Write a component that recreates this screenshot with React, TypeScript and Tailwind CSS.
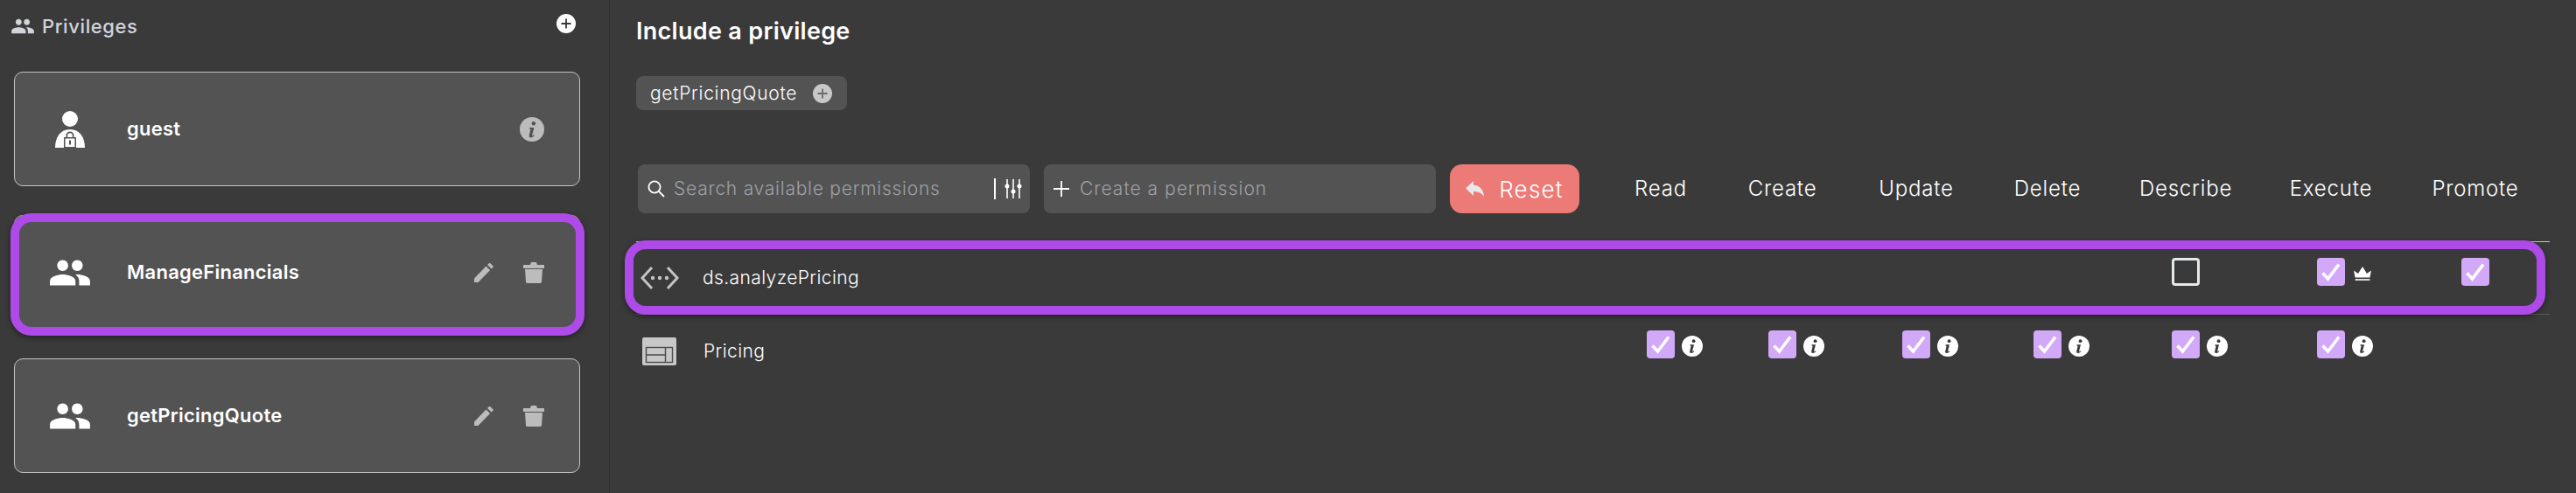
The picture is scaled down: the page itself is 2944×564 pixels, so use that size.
import React from "react";

const FONT = "font-['Inter','Liberation_Sans',sans-serif]";
const GRID = "grid grid-cols-[1107px_128px_150px_156px_144px_172px_160px_170px]";

const PEOPLE =
  "M16 11c1.66 0 2.99-1.34 2.99-3S17.66 5 16 5c-1.66 0-3 1.34-3 3s1.34 3 3 3zm-8 0c1.66 0 2.99-1.34 2.99-3S9.66 5 8 5C6.34 5 5 6.34 5 8s1.34 3 3 3zm0 2c-2.33 0-7 1.17-7 3.5V19h14v-2.5c0-2.33-4.67-3.5-7-3.5zm8 0c-.29 0-.62.02-.97.05 1.16.84 1.97 1.97 1.97 3.45V19h6v-2.5c0-2.33-4.67-3.5-7-3.5z";

function People({ className }: { className?: string }) {
  return (
    <svg viewBox="0 0 24 24" className={className} fill="currentColor">
      <path d={PEOPLE} />
    </svg>
  );
}

function GuestIcon() {
  return (
    <svg viewBox="0 0 34 42" className="h-[42px] w-[34px] text-white" fill="currentColor">
      <ellipse cx="17" cy="9" rx="9" ry="9" />
      <path d="M0 42C0 30 6 21 17 21s17 9 17 21z" />
      <path d="M10 42V30h2.5v-2a4.5 4.5 0 0 1 9 0v2H24v12z" fill="#535353" />
      <path d="M11.5 41V31.5h11V41zM14.2 30h5.6v-2a2.8 2.8 0 0 0-5.6 0z" />
      <rect x="16" y="33.5" width="2" height="5" fill="#535353" />
    </svg>
  );
}

function PencilIcon() {
  return (
    <svg viewBox="0 0 22 22" className="h-[22px] w-[22px] text-[#bcbcbc]" fill="currentColor">
      <path d="M0 17.5 13.5 3.5l4.6 4.6L4.5 22H0z" />
      <path d="M15 2l1.6-1.6a1.4 1.4 0 0 1 2 0l2.6 2.6a1.4 1.4 0 0 1 0 2L19.6 6.6z" />
    </svg>
  );
}

function TrashIcon() {
  return (
    <svg viewBox="0 0 24 24" className="h-6 w-6 text-[#bcbcbc]" fill="currentColor">
      <path d="M8 3l1-3h6l1 3h8v4H0V3z" />
      <path d="M2 8h20l-1 14.5a1.6 1.6 0 0 1-1.6 1.5H4.6A1.6 1.6 0 0 1 3 22.5z" />
    </svg>
  );
}

function InfoIcon({ className, ink }: { className?: string; ink: string }) {
  return (
    <svg viewBox="0 0 24 24" className={className} fill="currentColor">
      <circle cx="12" cy="12" r="12" />
      <circle cx="13.6" cy="6.2" r="1.9" fill={ink} />
      <path
        d="M9.4 10.2h4.6l-1.9 7.6c-.1.5.3.6.7.3l1-.8.5.6c-1 1.2-2.2 2-3.5 2-1.3 0-1.9-.8-1.6-2l1.3-5.6c.1-.5-.1-.8-.9-.9z"
        fill={ink}
      />
    </svg>
  );
}

function CircledPlus({ className, ink }: { className?: string; ink: string }) {
  return (
    <svg viewBox="0 0 22 22" className={className} fill="currentColor">
      <circle cx="11" cy="11" r="11" />
      <path d="M11 5.5v11M5.5 11h11" stroke={ink} strokeWidth="1.8" />
    </svg>
  );
}

function Checkbox({ checked }: { checked: boolean }) {
  if (!checked) return <div className="h-8 w-8 rounded-[4px] border-[3px] border-[#e5e9ec]" />;
  return (
    <div className="flex h-8 w-8 items-center justify-center rounded-[4px] bg-[#d2a8f9]">
      <svg viewBox="0 0 32 32" className="h-8 w-8" fill="none" stroke="white" strokeWidth="3.6">
        <path d="M6.5 17.5l6 6.5L25 7.5" />
      </svg>
    </div>
  );
}

function Crown() {
  return (
    <svg viewBox="0 0 20 16" className="h-4 w-5 text-white" fill="currentColor">
      <path d="M0 4.5l5 3.6L10 0l5 8.1 5-3.6-1.6 8H1.6z" />
      <rect x="1.6" y="14.2" width="16.8" height="1.6" />
    </svg>
  );
}

function Cell({ checked, extra }: { checked?: boolean; extra?: "info" | "crown" }) {
  if (checked === undefined) return <div />;
  return (
    <div className="grid grid-cols-[1fr_32px_1fr] items-center self-start pt-[18px]">
      <div />
      <Checkbox checked={checked} />
      {extra === "info" && (
        <div className="mt-1 pl-2">
          <InfoIcon className="h-6 w-6 text-white" ink="#3a3a3a" />
        </div>
      )}
      {extra === "crown" && (
        <div className="mt-1 pl-2.5">
          <Crown />
        </div>
      )}
    </div>
  );
}

function PrivilegeCard({ name, guest, selected }: { name: string; guest?: boolean; selected?: boolean }) {
  return (
    <div className="relative flex h-[131px] items-center rounded-[10px] border border-[#c4c4c4] bg-[#535353] pr-10">
      <div className="flex w-[128px] shrink-0 justify-center pr-[3px]">
        {guest ? <GuestIcon /> : <People className="h-[50px] w-[50px] text-white" />}
      </div>
      <div className="flex-1 text-[22px] font-semibold tracking-[0.25px] text-white">{name}</div>
      {guest ? (
        <InfoIcon className="h-7 w-7 text-[#bcbcbc]" ink="#535353" />
      ) : (
        <div className="flex items-center gap-[34px]">
          <PencilIcon />
          <TrashIcon />
        </div>
      )}
      {selected && (
        <div className="absolute -top-[3px] -right-[6px] -bottom-[8px] -left-[5px] rounded-[24px] border-[10px] border-[#ad4ae8] shadow-[0_2px_6px_rgba(0,0,0,0.45)]" />
      )}
    </div>
  );
}

const columns = ["Read", "Create", "Update", "Delete", "Describe", "Execute", "Promote"];

export default function App() {
  return (
    <div className={`flex h-[564px] w-[2944px] overflow-hidden bg-[#3a3a3a] ${FONT}`}>
      <div className="flex w-[697px] shrink-0 flex-col border-r border-[#2f2f2f]">
        <div className="flex h-[82px] items-start justify-between pt-[16px] pr-[38px] pl-[12px]">
          <div className="flex items-center gap-[8px]">
            <People className="h-7 w-7 text-[#d1d5db]" />
            <span className="text-[22px] leading-[28px] font-medium tracking-[0.6px] text-[#d1d5db]">Privileges</span>
          </div>
          <CircledPlus className="h-[22px] w-[22px] text-white" ink="#3a3a3a" />
        </div>
        <div className="flex flex-col gap-[33px] pr-[33px] pl-[16px]">
          <PrivilegeCard name="guest" guest />
          <PrivilegeCard name="ManageFinancials" selected />
          <PrivilegeCard name="getPricingQuote" />
        </div>
      </div>

      <div className="flex-1 pl-[30px]">
        <h1 className="flex h-[70px] items-center text-[27px] leading-none font-semibold tracking-[0.3px] text-white">Include a privilege</h1>
        <div className="mt-[17px] inline-flex h-[39px] items-center gap-[18px] rounded-[8px] bg-[#535353] pr-[17px] pl-4">
          <span className="text-[21px] font-light tracking-[0.7px] text-white">getPricingQuote</span>
          <CircledPlus className="h-[22px] w-[22px] text-[#c8c8c8]" ink="#6b6b6b" />
        </div>

        <div className={`${GRID} mt-[62px] h-[56px] items-center`}>
          <div className="flex gap-4 pl-[2px]">
            <div className="flex h-14 w-[448px] items-center rounded-[8px] bg-[#535353] pr-[9px] pl-[11px]">
              <svg viewBox="0 0 20 20" className="h-5 w-5 text-white" fill="none" stroke="currentColor" strokeWidth="1.8">
                <circle cx="8" cy="8" r="6.6" />
                <path d="M13 13l6 6" />
              </svg>
              <span className="ml-[10px] flex-1 text-[21px] font-light tracking-[0.75px] text-[#9ca0a8]">Search available permissions</span>
              <div className="mr-[10px] h-6 w-[2px] bg-white" />
              <svg viewBox="0 0 20 22" className="h-[22px] w-5 text-white" fill="currentColor" stroke="currentColor" strokeWidth="1.6">
                <path d="M3 0v22M10 0v22M17 0v22" />
                <circle cx="3" cy="8" r="1.7" />
                <circle cx="10" cy="14" r="1.7" />
                <circle cx="17" cy="8" r="1.7" />
              </svg>
            </div>
            <div className="flex h-14 w-[448px] items-center rounded-[8px] bg-[#535353] pl-[11px]">
              <svg viewBox="0 0 18 18" className="h-[18px] w-[18px] text-white" fill="none" stroke="currentColor" strokeWidth="1.8">
                <path d="M9 0v18M0 9h18" />
              </svg>
              <span className="ml-[12px] text-[21px] font-light tracking-[1px] text-[#9ca0a8]">Create a permission</span>
            </div>
            <div className="flex h-14 w-[148px] items-center justify-center gap-[17px] rounded-[14px] bg-[#ec7a77]">
              <svg viewBox="0 0 21 18" className="h-[18px] w-[21px] text-[#e8e8e8]" fill="currentColor">
                <path d="M9 0v4.5C16 5 20.5 10 21 18c-2.4-4-6-5.8-12-6v5L0 8.5z" />
              </svg>
              <span className="text-[26px] font-light tracking-[1.2px] text-white">Reset</span>
            </div>
          </div>
          {columns.map((c) => (
            <div key={c} className="text-center text-[24px] font-light tracking-[0.8px] text-white">
              {c}
            </div>
          ))}
        </div>

        <div className="mt-[32px] w-[2187px]">
          <div className={`${GRID} relative h-[84px] border-t border-b border-t-[#c4c4c4] border-b-[#5c5c5c]`}>
            <div className="flex items-center">
              <svg viewBox="0 0 44 28" className="ml-[5px] h-7 w-11 text-[#c4c4c4]" fill="none" stroke="currentColor" strokeWidth="3">
                <path d="M13 2L2 14l11 12M31 2l11 12-11 12" />
                <circle cx="14" cy="14" r="2.2" fill="currentColor" stroke="none" />
                <circle cx="22" cy="14" r="2.2" fill="currentColor" stroke="none" />
                <circle cx="30" cy="14" r="2.2" fill="currentColor" stroke="none" />
              </svg>
              <span className="ml-[27px] text-[21px] font-light tracking-[0.4px] text-white">ds.analyzePricing</span>
            </div>
            <Cell />
            <Cell />
            <Cell />
            <Cell />
            <Cell checked={false} />
            <Cell checked extra="crown" />
            <Cell checked />
            <div className="absolute -top-[2px] right-[5px] -bottom-[1px] -left-[13px] rounded-[24px] border-[10px] border-[#ad4ae8] shadow-[0_2px_6px_rgba(0,0,0,0.45)]" />
          </div>
          <div className={`${GRID} h-[83px]`}>
            <div className="flex items-center">
              <svg viewBox="0 0 39 32" className="ml-[7px] h-8 w-[39px]">
                <rect width="39" height="32" rx="2" fill="#c8c8c8" />
                <rect x="4.5" y="11.5" width="30" height="17" fill="none" stroke="#4a4a4a" strokeWidth="1.4" />
                <path d="M4.5 20h22M26.5 11.5v17" stroke="#4a4a4a" strokeWidth="1.4" />
              </svg>
              <span className="ml-[31px] text-[21px] font-light tracking-[0.4px] text-white">Pricing</span>
            </div>
            <Cell checked extra="info" />
            <Cell checked extra="info" />
            <Cell checked extra="info" />
            <Cell checked extra="info" />
            <Cell checked extra="info" />
            <Cell checked extra="info" />
            <Cell />
          </div>
        </div>
      </div>
    </div>
  );
}
